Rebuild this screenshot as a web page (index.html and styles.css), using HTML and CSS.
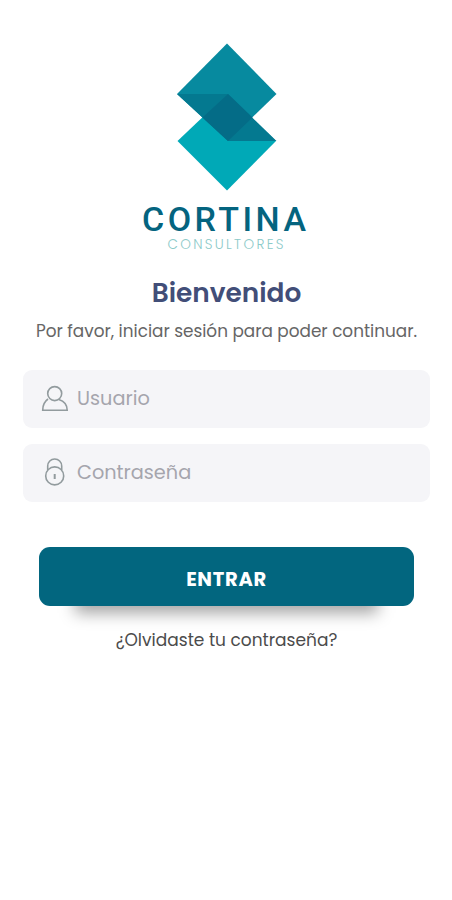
FILE: index.html
```html
<!DOCTYPE html>
<html lang="es">
<head>
<meta charset="utf-8">
<meta name="viewport" content="width=device-width, initial-scale=1">
<title>Cortina Consultores</title>
<link rel="stylesheet" href="styles.css">
</head>
<body>
<main class="login">
  <svg class="logo" width="180" height="214" viewBox="136 40 180 214" role="img" aria-label="Cortina Consultores">
    <path fill="#00a9b7" d="M227 94 276 141 227 190.500 177.500 141Z"/>
    <path fill="#078a9f" d="M227 43.500 276.500 94 228 141 177 94Z"/>
    <path fill="#047990" d="M177 94H228L276.500 141H228Z"/>
    <path fill="#046c87" d="M228 94 252.500 117.500 228 141 202.500 117.500Z"/>
    <text class="logo-name" x="142" y="230.500" textLength="164">CORTINA</text>
    <text class="logo-sub" x="167.500" y="248.500" textLength="116">CONSULTORES</text>
  </svg>
  <h1 class="title">Bienvenido</h1>
  <p class="subtitle">Por favor, iniciar sesión para poder continuar.</p>
  <form class="form">
    <label class="field">
      <svg class="icon" width="28" height="30" viewBox="0 0 28 30">
        <circle cx="13.700" cy="10.600" r="7"/>
        <path d="M7 16C3.500 18.500 1.700 21.500 1.700 27.200H26.200C26.200 21.500 23 18 17.800 16.400"/>
      </svg>
      <input class="input" type="text" placeholder="Usuario">
    </label>
    <label class="field">
      <svg class="icon" width="28" height="30" viewBox="0 0 28 30">
        <circle cx="13.700" cy="18.900" r="9"/>
        <path d="M6.700 13V9a7 7 0 0 1 14 0V13"/>
        <path class="keyhole" d="M13.700 17V22"/>
      </svg>
      <input class="input" type="password" placeholder="Contraseña">
    </label>
    <div class="action">
      <button class="submit" type="button">ENTRAR</button>
    </div>
  </form>
  <a class="forgot">¿Olvidaste tu contraseña?</a>
</main>
</body>
</html>
```
FILE: styles.css
```css
* { box-sizing: border-box; }
body {
  margin: 0;
  background: #fff;
  font-family: Poppins, Inter, sans-serif;
}
.login {
  min-height: 900px;
  padding: 40px 22px 0 23px;
  display: flex;
  flex-direction: column;
  align-items: center;
}
.logo { display: block; margin-right: 1px; }
.logo-name { font: 500 34px Roboto, sans-serif; fill: #04647f; }
.logo-sub { font: 300 13.500px Poppins, sans-serif; fill: #8ccac9; }
.title {
  margin: 21px 0 0;
  font-size: 26.400px;
  line-height: 36px;
  font-weight: 600;
  color: #424e78;
}
.subtitle {
  margin: 8px 0 0;
  font-size: 16.850px;
  line-height: 24px;
  color: #666;
  white-space: nowrap;
}
.form { width: 100%; margin-top: 27px; }
.field {
  display: flex;
  align-items: center;
  height: 58px;
  padding: 0 18px 2px;
  border-radius: 9px;
  background: #f5f5f8;
}
.field + .field { margin-top: 16px; }
.icon {
  flex: none;
  fill: none;
  stroke: #929b9e;
  stroke-width: 1.600;
}
.keyhole { stroke-width: 2; }
.input {
  flex: 1;
  min-width: 0;
  margin-left: 8px;
  padding: 0;
  border: 0;
  outline: 0;
  background: none;
  font: inherit;
  font-size: 19.300px;
}
.input::placeholder { color: #a5a5ad; opacity: 1; }
.action {
  position: relative;
  z-index: 0;
  width: 375px;
  margin: 45px 0 0 16px;
}
.action::after {
  content: "";
  position: absolute;
  z-index: -1;
  left: 36px;
  right: 36px;
  bottom: -7px;
  height: 30px;
  background: rgba(0, 0, 0, 0.360);
  filter: blur(8px);
}
.submit {
  display: block;
  width: 100%;
  height: 59px;
  padding: 5px 0 0;
  border: 0;
  border-radius: 11px;
  background: #02667f;
  color: #fff;
  font: inherit;
  font-size: 19.500px;
  font-weight: 700;
  letter-spacing: 0.700px;
}
.forgot {
  margin-top: 22px;
  font-size: 17px;
  line-height: 24px;
  color: #4c4c4c;
}
```
